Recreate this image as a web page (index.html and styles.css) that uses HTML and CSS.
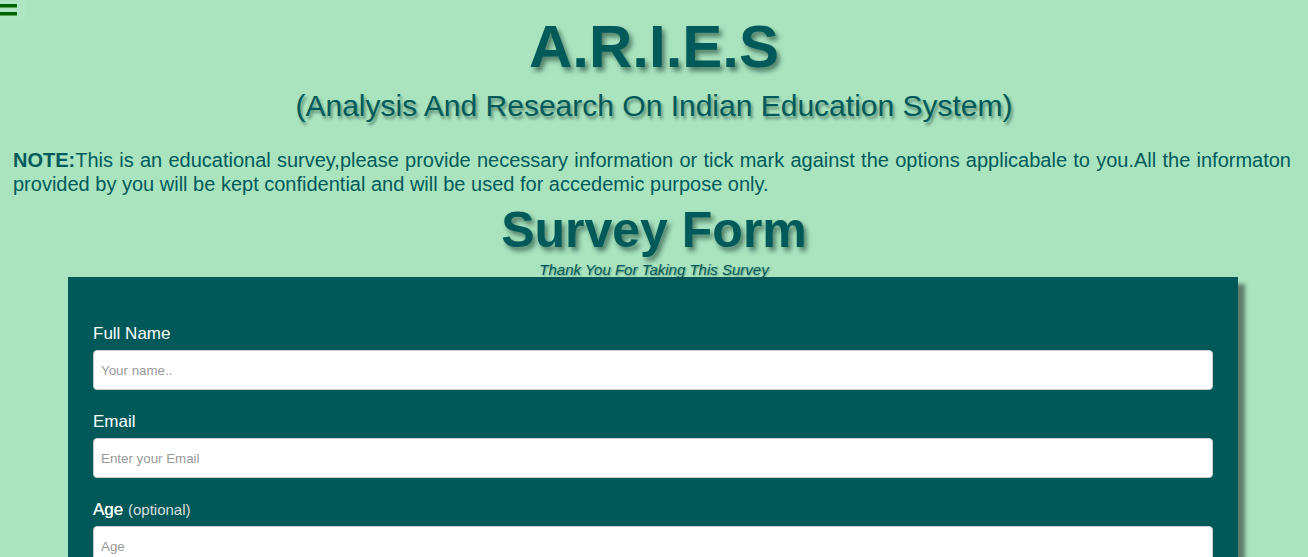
FILE: index.html
```html
<!DOCTYPE html>
<html lang="en">
<head>
<meta charset="utf-8">
<title>A.R.I.E.S Survey Form</title>
<link rel="stylesheet" href="styles.css">
</head>
<body>
<button class="menu-btn" aria-label="Menu">
  <svg width="25" height="20" viewBox="0 0 25 20"><rect x="0" y="4" width="17" height="3.5" fill="#006400"/><rect x="0" y="12" width="17" height="3.5" fill="#006400"/></svg>
</button>
<header class="header">
  <h1 class="title">A.R.I.E.S</h1>
  <h2 class="subtitle">(Analysis And Research On Indian Education System)</h2>
</header>
<p class="note"><b>NOTE:</b>This is an educational survey,please provide necessary information or tick mark against the options applicabale to you.All the informaton provided by you will be kept confidential and will be used for accedemic purpose only.</p>
<h1 class="form-title">Survey Form</h1>
<p class="thanks">Thank You For Taking This Survey</p>
<form class="survey">
  <label class="field-label" for="name">Full Name</label>
  <input class="field-input" id="name" type="text" placeholder="Your name..">
  <label class="field-label" for="email">Email</label>
  <input class="field-input" id="email" type="email" placeholder="Enter your Email">
  <label class="field-label" for="age"><span class="age">Age</span> <span class="optional">(optional)</span></label>
  <input class="field-input" id="age" type="number" placeholder="Age">
  <label class="field-label" for="state">State</label>
  <input class="field-input" id="state" type="text" placeholder="Your state">
</form>
</body>
</html>
```
FILE: styles.css
```css
html, body {
  margin: 0;
  padding: 0;
}
body {
  background: #a9e4bf;
  color: #005a5a;
  font-family: "Liberation Sans", Arial, sans-serif;
}
.menu-btn {
  position: absolute;
  top: 0;
  left: 0;
  width: 25px;
  height: 20px;
  padding: 0;
  margin: 0;
  border: 0;
  background: rgba(255, 255, 255, 0.06);
  display: block;
}
.menu-btn svg {
  display: block;
}
.header {
  text-align: center;
}
.title {
  margin: 12px 0 0;
  font-size: 60px;
  line-height: 70px;
  font-weight: bold;
  text-shadow: 3px 4px 5px rgba(0, 40, 30, 0.55);
}
.subtitle {
  margin: 6px 0 0;
  font-size: 30px;
  line-height: 36px;
  font-weight: normal;
  text-shadow: 2px 3px 3px rgba(0, 40, 30, 0.45);
}
.note {
  margin: 24px 17px 0 13px;
  font-size: 20px;
  line-height: 24px;
  text-align: justify;
}
.form-title {
  margin: 6px 0 0;
  text-align: center;
  font-size: 50px;
  line-height: 56px;
  font-weight: bold;
  text-shadow: 3px 4px 5px rgba(0, 40, 30, 0.55);
}
.thanks {
  margin: 5px 0 0;
  text-align: center;
  font-size: 15px;
  line-height: 14px;
  font-style: italic;
  text-shadow: 1px 1px 2px rgba(0, 40, 30, 0.4);
}
.survey {
  margin: 0 70px 0 68px;
  padding: 47px 25px 30px;
  background: #005959;
  box-shadow: 7px 7px 4px rgba(0, 0, 0, 0.45);
}
.field-label {
  display: block;
  margin-bottom: 6px;
  color: #ffffff;
  font-size: 17px;
  line-height: 20px;
}
.age {
  text-shadow: 0 0 0.6px #ffffff;
}
.optional {
  font-size: 15px;
  color: #dddddd;
}
.field-input {
  display: block;
  box-sizing: border-box;
  width: 100%;
  height: 40px;
  margin: 0 0 22px;
  padding: 0 7px;
  border: 1px solid #cccccc;
  border-radius: 4px;
  background: #ffffff;
  font-family: "Liberation Sans", Arial, sans-serif;
  font-size: 13.333px;
  color: #333333;
}
.field-input::placeholder {
  color: #999999;
}
```
